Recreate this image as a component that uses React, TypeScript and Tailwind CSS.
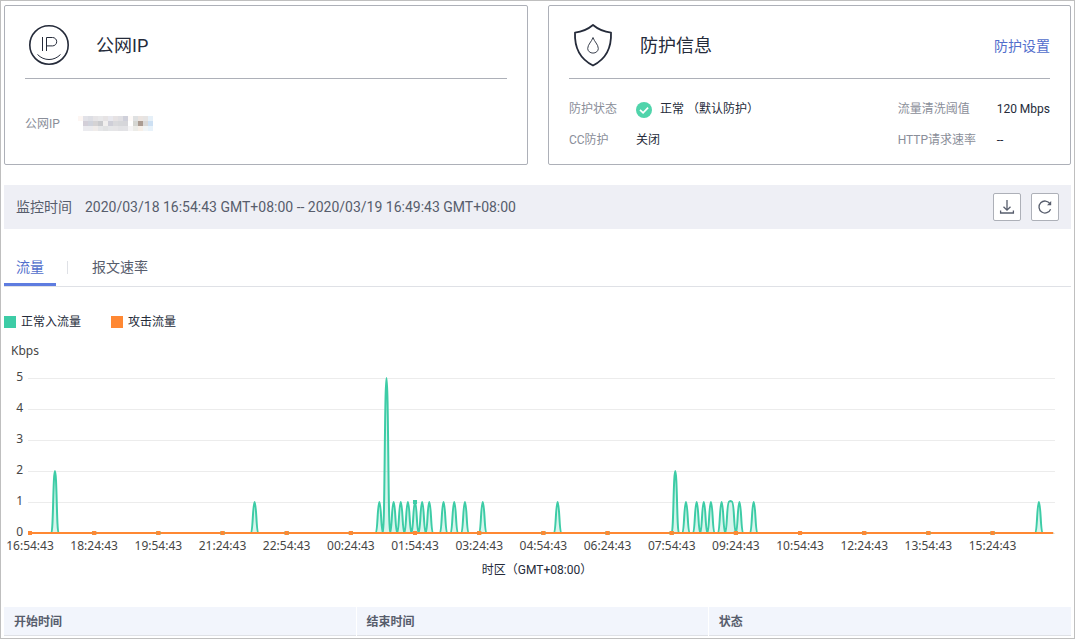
import { useState } from "react";

const CHART_LEFT = 26;
const CHART_BASE = 165;
const STEP = 3.565;
const ROW = 31;
const POINTS = 288;

const peaks: Record<number, number> = {
  7: 2, 63: 1, 98: 1, 100: 5, 102: 1, 104: 1, 106: 1, 108: 1, 110: 1, 112: 1,
  116: 1, 119: 1, 122: 1, 127: 1, 148: 1, 181: 2, 184: 1, 187: 1, 189: 1,
  191: 1, 194: 1, 196: 1, 197: 1, 199: 1, 203: 1, 283: 1,
};

const times = [
  "16:54:43", "18:24:43", "19:54:43", "21:24:43", "22:54:43", "00:24:43",
  "01:54:43", "03:24:43", "04:54:43", "06:24:43", "07:54:43", "09:24:43",
  "10:54:43", "12:24:43", "13:54:43", "15:24:43",
];

const xAt = (i: number) => CHART_LEFT + i * STEP;
const yAt = (v: number) => CHART_BASE - v * ROW;

function buildLine() {
  let d = `M${xAt(0)} ${yAt(0)}`;
  for (let i = 1; i < POINTS; i++) {
    const y0 = yAt(peaks[i - 1] ?? 0);
    const y1 = yAt(peaks[i] ?? 0);
    if (y0 === y1) {
      // a flat top bulges a little, a flat base does not
      const lift = y1 < CHART_BASE ? 1.5 : 0;
      d += ` C${xAt(i - 1) + 1} ${y0 - lift} ${xAt(i) - 1} ${y1 - lift} ${xAt(i)} ${y1}`;
    } else {
      d += ` C${xAt(i - 1) + 1.8} ${y0} ${xAt(i) - 1.8} ${y1} ${xAt(i)} ${y1}`;
    }
  }
  return d;
}

const line = buildLine();

const mosaic = [
  ["#fdf6f3", "#e2e2e8", "#dddee4", "#e6e4e6", "#e8e8ea", "#e6e3e4", "#e8e8ee", "#e6e2e3", "#e0dfe3", "#cfd0da", "#fefaf8", "#dfe1e2", "#ebe4e0", "#e6e4e3", "#e6f0f8"],
  ["#ffffff", "#d3cfd8", "#d0d3dc", "#d5d3d4", "#c9cacd", "#f1efee", "#cfcfd8", "#d9d9dc", "#d6d7da", "#d6d6da", "#ffffff", "#d5d6d2", "#ab9c92", "#dad9d8", "#cde0f3"],
  ["#ffffff", "#ebebef", "#ebebee", "#f0ecea", "#e5e6e8", "#e1e2e3", "#e5e6e8", "#e6e5e7", "#e2e2e5", "#e3e3e6", "#f5f4f5", "#ecece8", "#f6efe8", "#f1f5f7", "#e8f2fa"],
];

function IpIcon() {
  return (
    <svg width="42" height="42" viewBox="0 0 42 42" fill="none" stroke="#252b3a">
      <circle cx="21" cy="21" r="19.2" strokeWidth="1.6" />
      <path d="M9.5 30.5c6.5 6.7 16.5 6.7 23 0" strokeWidth="1" />
      <path d="M14.5 13v14M18.500 27V13.500h6a4.200 4.200 0 0 1 0 8.400h-6" strokeWidth="1" />
    </svg>
  );
}

function ShieldIcon() {
  return (
    <svg width="42" height="44" viewBox="0 0 42 44" fill="none" stroke="#252b3a">
      <path
        d="M21 2c-5 4.200-11 6.800-18 7.600C2.400 24 7 35.500 21 42.500 35 35.500 39.600 24 39 9.600 32 8.800 26 6.200 21 2z"
        strokeWidth="1.8"
        strokeLinejoin="round"
      />
      <path d="M21 14.500c-1.200 4-5.300 7-5.300 11a5.300 4.600 0 0 0 10.600 0c0-4-4.100-7-5.300-11z" strokeWidth="0.9" />
    </svg>
  );
}

function CheckIcon() {
  return (
    <svg width="16" height="16" viewBox="0 0 16 16">
      <circle cx="8" cy="8" r="8" fill="#50d4ab" />
      <path d="M4 7.800l3.100 3 5-5.200" fill="none" stroke="#fff" strokeWidth="1.7" />
    </svg>
  );
}

function TrafficChart() {
  return (
    <svg viewBox="0 0 1067 220" className="block w-full font-['Noto_Sans',sans-serif] text-xs" role="img" aria-label="流量">
      {[0, 1, 2, 3, 4, 5].map((v) => (
        <g key={v}>
          <path d={`M24 ${yAt(v) + 0.5}H1051`} stroke="#ececec" />
          <text x="19" y={yAt(v) + 3} textAnchor="end" fill="#464646">{v}</text>
        </g>
      ))}
      <path d={`${line} V${CHART_BASE} H${CHART_LEFT}Z`} fill="#3dcca6" fillOpacity="0.2" />
      <path d={line} fill="none" stroke="#3dcca6" strokeWidth="2" strokeLinejoin="round" />
      <path d={`M${CHART_LEFT} ${CHART_BASE}H${xAt(POINTS - 1)}`} stroke="#ff8833" strokeWidth="2" />
      {times.map((t, i) => {
        const x = xAt(i * 18);
        return (
          <g key={t}>
            <rect x={x - 2} y={yAt(peaks[i * 18] ?? 0) - 2} width="4" height="4" fill="#3dcca6" />
            <rect x={x - 2} y={CHART_BASE - 2} width="4" height="4" fill="#ff8833" />
            <text x={x} y={CHART_BASE + 17} textAnchor="middle" fill="#464646">{t}</text>
          </g>
        );
      })}
      <text x="533" y="206" textAnchor="middle" fill="#252b3a" className="font-[Roboto,'Noto_Sans_CJK_SC',sans-serif]">
        时区（GMT+08:00）
      </text>
    </svg>
  );
}

export default function App() {
  const [tab, setTab] = useState(0);

  return (
    <div className="border border-[#bfbfbf] bg-white px-[3px] pt-1 pb-[2px] font-[Roboto,'Noto_Sans_CJK_SC',sans-serif] text-xs text-[#252b3a]">
      <div className="grid grid-cols-[524fr_523fr] gap-5">
        <section className="h-40 rounded-xs border border-[#adb0b8] px-5">
          <div className="flex h-[73px] items-center gap-[26px] border-b border-[#adb0b8] pt-2 pl-[3px]">
            <div className="pb-[2px]"><IpIcon /></div>
            <h2 className="text-lg">公网IP</h2>
          </div>
          <dl className="flex items-start pt-[37px]">
            <dt className="w-[53px] text-[#8a8e99]">公网IP</dt>
            <dd>
              <svg width="75" height="15" shapeRendering="crispEdges" aria-hidden="true">
                {mosaic.map((row, r) =>
                  row.map((c, i) => <rect key={`${r}-${i}`} x={i * 5} y={r * 5} width="5" height="5" fill={c} />)
                )}
              </svg>
            </dd>
          </dl>
        </section>

        <section className="h-40 rounded-xs border border-[#adb0b8] px-5">
          <div className="flex h-[73px] items-center gap-[26px] border-b border-[#adb0b8] pt-2 pl-[3px]">
            <div className="pb-[2px]"><ShieldIcon /></div>
            <h2 className="text-lg">防护信息</h2>
            <a href="#settings" className="ml-auto text-sm text-[#526ecc]">防护设置</a>
          </div>
          <div className="flex justify-between pt-[15px]">
            <dl className="grid grid-cols-[67px_auto] leading-[31px]">
              <dt className="text-[#8a8e99]">防护状态</dt>
              <dd className="flex items-center gap-2"><CheckIcon />正常 （默认防护）</dd>
              <dt className="text-[#8a8e99]">CC防护</dt>
              <dd>关闭</dd>
            </dl>
            <dl className="grid grid-cols-[99px_auto] leading-[31px]">
              <dt className="text-[#8a8e99]">流量清洗阈值</dt>
              <dd>120 Mbps</dd>
              <dt className="text-[#8a8e99]">HTTP请求速率</dt>
              <dd>--</dd>
            </dl>
          </div>
        </section>
      </div>

      <div className="mt-5 flex h-11 items-center bg-[#eeeff5] px-3 text-sm text-[#575d6c]">
        <span className="pr-[13px]">监控时间</span>
        <span>2020/03/18 16:54:43 GMT+08:00 -- 2020/03/19 16:49:43 GMT+08:00</span>
        <div className="ml-auto flex gap-[10px]">
          <button type="button" aria-label="下载" className="flex size-7 items-center justify-center rounded-xs border border-[#adb0b8] bg-white">
            <svg width="16" height="16" viewBox="0 0 16 16" fill="none" stroke="#575d6c" strokeWidth="1.3">
              <path d="M8 1v10M4.500 7.700L8 11.200l3.500-3.500M1.600 11.500v2.500h12.800v-2.500" />
            </svg>
          </button>
          <button type="button" aria-label="刷新" className="flex size-7 items-center justify-center rounded-xs border border-[#adb0b8] bg-white">
            <svg width="16" height="16" viewBox="0 0 16 16" fill="none" stroke="#575d6c" strokeWidth="1.3">
              <path d="M13.600 10.200A6 6 0 1 1 13 4.700" />
              <path d="M14.200 2v4.200H10z" fill="#575d6c" stroke="none" />
            </svg>
          </button>
        </div>
      </div>

      <div role="tablist" className="mt-5 flex h-[38px] items-stretch border-b border-[#dfe1e6] text-sm text-[#575d6c]">
        <button
          type="button"
          role="tab"
          aria-selected={tab === 0}
          onClick={() => setTab(0)}
          className={`border-b-3 px-3 pt-[2px] ${tab === 0 ? "border-[#5e7ce0] text-[#526ecc]" : "border-transparent"}`}
        >
          流量
        </button>
        <span className="mr-3 ml-[11px] my-3 w-px bg-[#dfe1e6]" />
        <button
          type="button"
          role="tab"
          aria-selected={tab === 1}
          onClick={() => setTab(1)}
          className={`border-b-3 px-3 pt-[2px] ${tab === 1 ? "border-[#5e7ce0] text-[#526ecc]" : "border-transparent"}`}
        >
          报文速率
        </button>
      </div>

      <div className="mt-[26px] flex gap-[30px] leading-[18px]">
        <span className="flex items-center gap-[5px]"><i className="size-3 bg-[#3dcca6]" />正常入流量</span>
        <span className="flex items-center gap-[5px]"><i className="size-3 bg-[#ff8833]" />攻击流量</span>
      </div>
      <p className="mt-3 pl-[7px] font-['Noto_Sans',sans-serif] leading-4 text-[#464646]">Kbps</p>
      <div className="mt-[9px]">
        <TrafficChart />
      </div>

      <table className="mt-[19px] w-full table-fixed border-b border-[#dfe1e6] bg-[#f2f5fc] text-left text-[#575d6c]">
        <thead>
          <tr className="h-7">
            <th className="w-[33%] border-r border-white px-[10px] pt-[2px] font-bold">开始时间</th>
            <th className="w-[33%] border-r border-white px-[10px] pt-[2px] font-bold">结束时间</th>
            <th className="px-[10px] pt-[2px] font-bold">状态</th>
          </tr>
        </thead>
      </table>
    </div>
  );
}
